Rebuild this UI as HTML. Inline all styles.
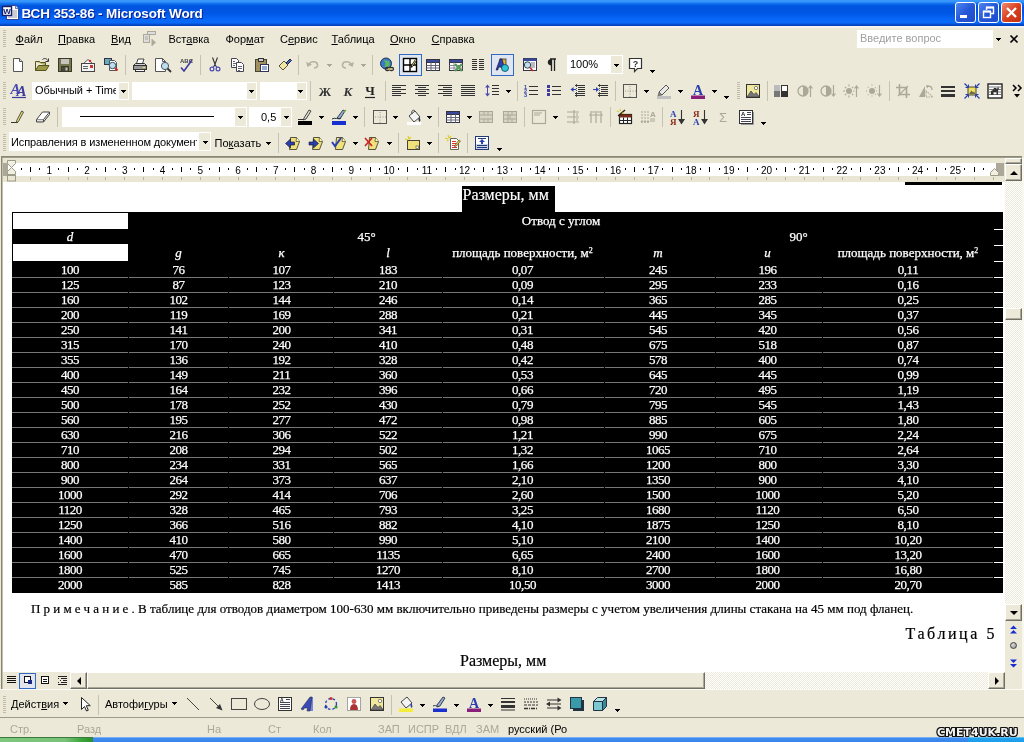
<!DOCTYPE html>
<html><head><meta charset="utf-8"><title>ВСН 353-86 - Microsoft Word</title>
<style>
html,body{margin:0;padding:0}
body{width:1024px;height:742px;overflow:hidden;position:relative;background:#ece9d8;font-family:"Liberation Sans","DejaVu Sans",sans-serif;font-size:11px;color:#000}
.a{position:absolute}
div,span{box-sizing:border-box}
/* title */
#tb{position:absolute;left:0;top:0;width:1024px;height:26px;background:linear-gradient(#3c9afc 0,#3492fb 7%,#1170ee 14%,#0258e2 22%,#0054e0 30%,#0056e3 48%,#035ff0 62%,#0868f8 76%,#0a6af8 88%,#0650d4 93%,#003cae 100%)}
#tt{position:absolute;left:21.500px;top:5.500px;font:bold 13.500px "Liberation Sans","DejaVu Sans",sans-serif;color:#fff;text-shadow:1px 1px 0 #0a1e8c;letter-spacing:-0.15px;white-space:nowrap}
.wb{position:absolute;top:2px;width:21px;height:21px;border:1px solid #fff;border-radius:3px;background:linear-gradient(135deg,#4f86f0 0%,#2458d8 50%,#1f4ccc 100%)}
.wb.x{background:linear-gradient(135deg,#ee8b6f 0%,#d9411f 50%,#c23010 100%)}
/* menu */
.m{position:absolute;top:33px;font-size:11px;white-space:nowrap}
.m u{text-decoration:underline}
/* doc */
#doc{position:absolute;left:3px;top:182px;width:1002px;height:490px;background:#fff}
.ser{font-family:"Liberation Serif","DejaVu Serif",serif;-webkit-text-stroke:0.2px currentColor}
.c{position:absolute;width:80px;text-align:center;color:#fff;font:13px/14px "Liberation Serif","DejaVu Serif",serif;white-space:nowrap;letter-spacing:-0.45px;-webkit-text-stroke:0.25px #fff}
.rl{position:absolute;left:12px;width:982px;height:1px;background:#767676}
.re{position:absolute;left:994px;width:9px;height:1px;background:#fff}

.sp{position:absolute;width:1px;background:#c5c2b2}
.dd{position:absolute;width:0;height:0;border-left:3px solid transparent;border-right:3px solid transparent;border-top:3px solid #000}
.gr{position:absolute;width:3px;background:repeating-linear-gradient(#c0bca8 0,#c0bca8 1px,transparent 1px,transparent 2px)}
.cb{position:absolute;background:#fff;font-size:11px;overflow:hidden}
.act{position:absolute;border:1px solid #316ac5;background:#dfe6f2}
.rn{position:absolute;top:164.500px;width:20px;text-align:center;font-size:10px;line-height:12px}
svg{overflow:visible}

.sb{position:absolute;background:#ece9d8;border:1px solid;border-color:#fff #716f64 #716f64 #fff;box-shadow:inset -1px -1px 0 #aca899}
#root{position:absolute;left:0;top:0;width:1024px;height:742px;overflow:hidden;will-change:transform;transform:translateZ(0)}
</style></head><body><div id="root">
<!-- title bar -->
<div id="tb"></div>
<div id="tbl" class="a" style="left:0;top:26px;width:1024px;height:2px;background:linear-gradient(#f6f7fb,#f1efe6)"></div>
<div id="tt">ВСН 353-86 - Microsoft Word</div>
<div class="wb" style="left:955px"></div>
<div class="wb" style="left:978px"></div>
<div class="wb x" style="left:1001px"></div>

<svg class="a" style="left:2px;top:4px" width="17" height="17" viewBox="0 0 17 17"><path d="M4.500 1.500h9l3 3v11h-12z" fill="#fff" stroke="#1a2a7a" stroke-width=".8"/><path d="M13.500 1.500v3h3" fill="#dde" stroke="#1a2a7a" stroke-width=".6"/><path d="M10 7h5M10 9h5M10 11h5M6 13h9" stroke="#99a"/><rect x="0.500" y="2.500" width="9" height="9" fill="#fff" stroke="#14206a" stroke-width="1.400"/><text x="5" y="10" text-anchor="middle" font-family="Liberation Sans,sans-serif" font-weight="bold" font-size="8" fill="#14206a">W</text></svg>
<svg class="a" style="left:955px;top:2px" width="21" height="21" viewBox="0 0 21 21"><rect x="5" y="13" width="7" height="3" fill="#fff"/></svg>
<svg class="a" style="left:978px;top:2px" width="21" height="21" viewBox="0 0 21 21"><path d="M8.500 8v-2.500h7v6h-2.500" fill="none" stroke="#fff" stroke-width="1.400"/><path d="M8 5.500h8" stroke="#fff" stroke-width="2"/><rect x="5.500" y="9.500" width="7" height="6" fill="none" stroke="#fff" stroke-width="1.400"/><path d="M5 9.500h8" stroke="#fff" stroke-width="2"/></svg>
<svg class="a" style="left:1001px;top:2px" width="21" height="21" viewBox="0 0 21 21"><path d="M6 6l9 9M15 6l-9 9" stroke="#fff" stroke-width="2.400"/></svg>
<div class="gr" style="left:3px;top:30px;height:17px"></div>
<span class="m" style="left:15.5px"><u>Ф</u>айл</span>
<span class="m" style="left:58px"><u>П</u>равка</span>
<span class="m" style="left:111px"><u>В</u>ид</span>
<span class="m" style="left:168.5px">Вст<u>а</u>вка</span>
<span class="m" style="left:225.5px">Фор<u>м</u>ат</span>
<span class="m" style="left:280px">С<u>е</u>рвис</span>
<span class="m" style="left:331.5px"><u>Т</u>аблица</span>
<span class="m" style="left:390px"><u>О</u>кно</span>
<span class="m" style="left:431.5px"><u>С</u>правка</span>
<svg class="a" style="left:141px;top:31px" width="16" height="16" viewBox="0 0 16 16"><rect x="2.500" y="3.500" width="6" height="8" fill="#ddd" stroke="#aca899"/><rect x="6.500" y="0.500" width="8" height="3" fill="#ddd" stroke="#aca899"/><path d="M4 6h3M4 8h3" stroke="#aca899"/><path d="M11 8l4 3.500-4 3.500z" fill="#aca899"/><path d="M11 8v7" stroke="#aca899"/></svg>
<div class="cb" style="left:857px;top:30px;width:136px;height:18px"><span style="position:absolute;left:3px;top:2px;color:#a0a0a0;white-space:nowrap;letter-spacing:0px;">Введите вопрос</span></div>
<svg class="a" style="left:996px;top:38px" width="5" height="3" viewBox="0 0 5 3" shape-rendering="crispEdges"><path d="M0 0h5v1h-5zM1 1h3v1h-3zM2 2h1v1h-1z" fill="#000"/></svg>
<svg class="a" style="left:1009px;top:34px" width="10" height="10" viewBox="0 0 10 10"><path d="M1.500 1.500l7 7M8.500 1.500l-7 7" stroke="#000" stroke-width="1.700"/></svg>
<div class="gr" style="left:3px;top:56px;height:18px"></div>
<svg class="a" style="left:10px;top:57px" width="16" height="16" viewBox="0 0 16 16"><path d="M3.5 1.5h6l3 3v10h-9z" fill="#fff" stroke="#555"/><path d="M9.5 1.5v3h3" fill="#ddd" stroke="#555"/></svg>
<svg class="a" style="left:34px;top:57px" width="16" height="16" viewBox="0 0 16 16"><path d="M1.500 4.500h4l1 1h5v3" fill="#b5b360" stroke="#55541c"/><path d="M1.500 13.500v-9" stroke="#55541c"/><path d="M1.500 13.500l3-5h10.500l-3 5z" fill="#9c9a45" stroke="#55541c"/><path d="M8.500 2.500c2-1.800 4.500-1 5 1" fill="none" stroke="#333"/><path d="M11.500 4.500h3v-3" fill="none" stroke="#333"/></svg>
<svg class="a" style="left:57px;top:57px" width="16" height="16" viewBox="0 0 16 16"><rect x="1.500" y="1.500" width="13" height="13" fill="#77774f" stroke="#3a3a2a"/><rect x="4" y="2" width="8" height="5" fill="#c4c4bc"/><rect x="4.500" y="9.500" width="7" height="5" fill="#4a4a3a" stroke="#3a3a2a"/><rect x="8.500" y="10.500" width="2" height="3" fill="#c4c4bc"/></svg>
<svg class="a" style="left:80px;top:57px" width="16" height="16" viewBox="0 0 16 16"><path d="M3.500 6.500l4.500-4 4.500 4" fill="#fff" stroke="#555"/><rect x="1.500" y="6.500" width="13" height="8" fill="#f4f4f4" stroke="#444"/><rect x="3" y="9" width="5" height="1" fill="#666"/><rect x="3" y="11" width="5" height="1" fill="#666"/><rect x="10" y="8" width="3" height="3" fill="#c33"/><circle cx="10" cy="4" r="1.200" fill="#d22"/></svg>
<svg class="a" style="left:103px;top:57px" width="16" height="16" viewBox="0 0 16 16"><rect x="1.500" y="1.500" width="7" height="6" fill="#6ab" stroke="#334"/><path d="M6.500 3.500h5l2 2v8h-7z" fill="#fff" stroke="#555"/><circle cx="9.500" cy="8.500" r="3.200" fill="#bfe0ea" stroke="#357"/><path d="M12 11l2.500 2.500" stroke="#c22" stroke-width="2"/></svg>
<div class="sp" style="left:125px;top:55px;height:20px"></div>
<svg class="a" style="left:132px;top:57px" width="16" height="16" viewBox="0 0 16 16"><path d="M4.500 6.500l1.500-4.500h6l-1.500 4.500" fill="#fff" stroke="#444"/><path d="M1.500 8.500l2-2h9l2 2v4h-13z" fill="#cfcfcf" stroke="#333"/><rect x="1.500" y="8.500" width="13" height="4" fill="#9a9a9a" stroke="#333"/><rect x="3.500" y="12.500" width="9" height="2" fill="#fff" stroke="#333"/><rect x="11" y="10" width="2" height="1" fill="#ee3"/></svg>
<svg class="a" style="left:155px;top:57px" width="16" height="16" viewBox="0 0 16 16"><path d="M0.500 1.500h7l3 3v10h-10z" fill="#fff" stroke="#555"/><path d="M7.500 1.500v3h3" fill="none" stroke="#555"/><circle cx="10" cy="9" r="3.600" fill="#bfe0ea" stroke="#456"/><path d="M12.500 11.500l3.500 3.500" stroke="#333" stroke-width="1.800"/></svg>
<svg class="a" style="left:178px;top:57px" width="16" height="16" viewBox="0 0 16 16"><text x="2" y="6" font-family="Liberation Sans,sans-serif" font-size="6" font-weight="bold" fill="#444">ABC</text><path d="M3 10.500l3 3.500 8-11" fill="none" stroke="#3b3b9f" stroke-width="1.600"/></svg>
<div class="sp" style="left:200px;top:55px;height:20px"></div>
<svg class="a" style="left:207px;top:57px" width="16" height="16" viewBox="0 0 16 16"><path d="M5.500 0.500l3.200 8.500M10.500 0.500l-3.200 8.500" stroke="#333" stroke-width="1.100" fill="none"/><circle cx="5" cy="12" r="1.900" fill="none" stroke="#4a4ab0" stroke-width="1.200"/><circle cx="11" cy="12" r="1.900" fill="none" stroke="#4a4ab0" stroke-width="1.200"/><path d="M7.300 9l-1.500 1.500M8.700 9l1.500 1.500" stroke="#4a4ab0" stroke-width="1.100"/></svg>
<svg class="a" style="left:230px;top:57px" width="16" height="16" viewBox="0 0 16 16"><path d="M1.500 1.500h5l2 2v7h-7z" fill="#fff" stroke="#445"/><path d="M6.500 5.500h5l2 2v7h-7z" fill="#fff" stroke="#445"/><path d="M8 9.500h4M8 11.500h4M8 13.500h2M3 4.500h2M3 6.500h3M3 8.500h2" stroke="#667" /></svg>
<svg class="a" style="left:254px;top:57px" width="16" height="16" viewBox="0 0 16 16"><rect x="1.500" y="2.500" width="11" height="12" fill="#a09060" stroke="#443"/><rect x="4.500" y="1.500" width="5" height="3" fill="#ccc" stroke="#333"/><rect x="6.500" y="7.500" width="8" height="7" fill="#fff" stroke="#335"/><path d="M8 10h5M8 12h5" stroke="#35a"/></svg>
<svg class="a" style="left:277px;top:57px" width="16" height="16" viewBox="0 0 16 16"><path d="M2 9l5-5 4 4-5 5z" fill="#f4e8a0" stroke="#554"/><path d="M9 6l4-4 1.500 1.500-4 4z" fill="#46b" stroke="#224"/><path d="M3 10l3 3" stroke="#554"/></svg>
<div class="sp" style="left:298px;top:55px;height:20px"></div>
<svg class="a" style="left:305px;top:57px" width="16" height="16" viewBox="0 0 16 16"><path d="M3.500 8.500c1-4.500 8-5 9-1 .5 2.500-1.500 3.500-3.500 3.500" fill="none" stroke="#b5b2a2" stroke-width="1.600"/><path d="M1 5l1.500 5 4.500-2.500z" fill="#b5b2a2"/></svg>
<svg class="a" style="left:327px;top:64px" width="5" height="3" viewBox="0 0 5 3" shape-rendering="crispEdges"><path d="M0 0h5v1h-5zM1 1h3v1h-3zM2 2h1v1h-1z" fill="#aca899"/></svg>
<svg class="a" style="left:339px;top:57px" width="16" height="16" viewBox="0 0 16 16"><path d="M12.500 8.500c-1-4.500-8-5-9-1-.5 2.500 1.500 3.500 3.500 3.500" fill="none" stroke="#b5b2a2" stroke-width="1.600"/><path d="M15 5l-1.500 5-4.500-2.500z" fill="#b5b2a2"/></svg>
<svg class="a" style="left:361px;top:64px" width="5" height="3" viewBox="0 0 5 3" shape-rendering="crispEdges"><path d="M0 0h5v1h-5zM1 1h3v1h-3zM2 2h1v1h-1z" fill="#aca899"/></svg>
<div class="sp" style="left:372px;top:55px;height:20px"></div>
<svg class="a" style="left:379px;top:57px" width="16" height="16" viewBox="0 0 16 16"><circle cx="7" cy="6.500" r="5.500" fill="#3a78c8" stroke="#235"/><path d="M4 3c2 1 3 3 2 5s1 3 3 2c2-1 2-4 1-6" fill="#5cb85c" stroke="none"/><rect x="6.500" y="10.500" width="4" height="3" rx="1.500" fill="none" stroke="#333" stroke-width="1.300"/><rect x="10.500" y="10.500" width="4" height="3" rx="1.500" fill="none" stroke="#333" stroke-width="1.300"/><path d="M9 12h3" stroke="#dc5" stroke-width="1.500"/></svg>
<div class="act" style="left:399px;top:54px;width:23px;height:22px"></div>
<svg class="a" style="left:402px;top:57px" width="16" height="16" viewBox="0 0 16 16"><rect x="1.500" y="1.500" width="13" height="13" fill="#fff" stroke="#000" stroke-width="1.400"/><path d="M8 1.500v13M1.500 8h13" stroke="#000" stroke-width="1.400"/><path d="M10 9l4-6" stroke="#000" stroke-width="2.200"/><path d="M10 9l4-6" stroke="#e9d36a" stroke-width="1"/><path d="M9.300 10.500l.7-1.500" stroke="#000" stroke-width="1.500"/></svg>
<svg class="a" style="left:425px;top:57px" width="16" height="16" viewBox="0 0 16 16"><rect x="1.500" y="2.500" width="13" height="11" fill="#fff" stroke="#334"/><rect x="1.500" y="2.500" width="13" height="3" fill="#3a4a9a" stroke="#334"/><path d="M6 5.500v8M10.500 5.500v8M1.500 8.500h13M1.500 11h13" stroke="#667"/></svg>
<svg class="a" style="left:448px;top:57px" width="16" height="16" viewBox="0 0 16 16"><rect x="1.500" y="2.500" width="13" height="11" fill="#fff" stroke="#334"/><rect x="1.500" y="2.500" width="13" height="3" fill="#3a4a9a" stroke="#334"/><path d="M6 5.500v8M1.500 8.500h13M1.500 11h13" stroke="#889"/><path d="M7 7l7 7M14 7l-7 7" stroke="#5a9a5a" stroke-width="2.400"/></svg>
<svg class="a" style="left:470px;top:57px" width="16" height="16" viewBox="0 0 16 16"><path d="M2 2.500h5M2 4.500h5M2 6.500h5M2 8.500h5M2 10.500h5M2 12.500h5M9 2.500h5M9 4.500h5M9 6.500h5M9 8.500h5M9 10.500h5M9 12.500h5" stroke="#333" stroke-width="1"/></svg>
<div class="act" style="left:491px;top:54px;width:23px;height:22px"></div>
<svg class="a" style="left:494px;top:57px" width="16" height="16" viewBox="0 0 16 16"><rect x="6" y="2" width="6" height="8" fill="#e2b13c" stroke="#333" stroke-width=".8"/><path d="M2 13l4-11 2 0 3 11h-2.500l-.8-3h-3l-.9 3z" fill="#2a3fb0" stroke="#112" stroke-width=".6"/><circle cx="11" cy="11" r="3.500" fill="#2cc6d8" stroke="#145" stroke-width=".8"/></svg>
<svg class="a" style="left:522px;top:57px" width="16" height="16" viewBox="0 0 16 16"><rect x="1.500" y="1.500" width="13" height="12" fill="#fff" stroke="#334"/><rect x="1.500" y="1.500" width="13" height="2.500" fill="#3a4a9a"/><path d="M9 6h4M9 8h4M9 10h4" stroke="#778"/><circle cx="5.500" cy="8" r="3.200" fill="#bfe0ea" stroke="#345"/><path d="M8 10.500l3 3.500" stroke="#c33" stroke-width="1.800"/></svg>
<svg class="a" style="left:543px;top:57px" width="16" height="16" viewBox="0 0 16 16"><path d="M7 2h6M8.500 2v12M11.500 2v12" stroke="#222" stroke-width="1.300" fill="none"/><path d="M8.500 2c-5 0-5 6.500 0 6.500z" fill="#222"/></svg>
<div class="cb" style="left:567px;top:55px;width:56px;height:19px"><span style="position:absolute;left:3px;top:2.5px;color:#000;white-space:nowrap;letter-spacing:0px;">100%</span></div>
<div class="a" style="left:611px;top:56px;width:11px;height:17px;background:#ece9d8"></div>
<svg class="a" style="left:614px;top:64px" width="5" height="3" viewBox="0 0 5 3" shape-rendering="crispEdges"><path d="M0 0h5v1h-5zM1 1h3v1h-3zM2 2h1v1h-1z" fill="#000"/></svg>
<svg class="a" style="left:628px;top:57px" width="16" height="16" viewBox="0 0 16 16"><path d="M1.500 1.500h12v10h-4l-3 3v-3h-5z" fill="#fff" stroke="#333" stroke-width="1.200"/><text x="4.700" y="10" font-family="Liberation Sans,sans-serif" font-size="9" font-weight="bold" fill="#333">?</text></svg>
<svg class="a" style="left:650px;top:70px" width="5" height="3" viewBox="0 0 5 3" shape-rendering="crispEdges"><path d="M0 0h5v1h-5zM1 1h3v1h-3zM2 2h1v1h-1z" fill="#000"/></svg>
<div class="gr" style="left:3px;top:82px;height:18px"></div>
<svg class="a" style="left:11px;top:83px" width="16" height="16" viewBox="0 0 16 16"><text x="-0.500" y="11" font-family="Liberation Serif,serif" font-size="15" font-style="italic" font-weight="bold" fill="#4a4ab0">A</text><text x="5.500" y="13" font-family="Liberation Serif,serif" font-size="15" font-style="italic" font-weight="bold" fill="#3b3ba0">A</text><path d="M1 14.500h14" stroke="#3b3ba0" stroke-width="1.200"/></svg>
<div class="cb" style="left:32px;top:82px;width:97px;height:18px"><span style="position:absolute;left:3px;top:2px;color:#000;white-space:nowrap;letter-spacing:-0.1px;overflow:hidden;width:80.5px;">Обычный + Time</span></div>
<div class="a" style="left:119px;top:83px;width:9px;height:16px;background:#ece9d8"></div>
<svg class="a" style="left:121px;top:90px" width="5" height="3" viewBox="0 0 5 3" shape-rendering="crispEdges"><path d="M0 0h5v1h-5zM1 1h3v1h-3zM2 2h1v1h-1z" fill="#000"/></svg>
<div class="cb" style="left:132px;top:82px;width:125px;height:18px"></div>
<div class="a" style="left:247px;top:83px;width:9px;height:16px;background:#ece9d8"></div>
<svg class="a" style="left:249px;top:90px" width="5" height="3" viewBox="0 0 5 3" shape-rendering="crispEdges"><path d="M0 0h5v1h-5zM1 1h3v1h-3zM2 2h1v1h-1z" fill="#000"/></svg>
<div class="cb" style="left:260px;top:82px;width:47px;height:18px"></div>
<div class="a" style="left:297px;top:83px;width:9px;height:16px;background:#ece9d8"></div>
<svg class="a" style="left:298px;top:90px" width="5" height="3" viewBox="0 0 5 3" shape-rendering="crispEdges"><path d="M0 0h5v1h-5zM1 1h3v1h-3zM2 2h1v1h-1z" fill="#000"/></svg>
<div class="sp" style="left:310px;top:81px;height:20px"></div>
<svg class="a" style="left:317px;top:83px" width="16" height="16" viewBox="0 0 16 16"><text x="8" y="12.500" text-anchor="middle" font-family="Liberation Serif,serif" font-size="12.500" font-weight="bold" fill="#333">Ж</text></svg>
<svg class="a" style="left:340px;top:83px" width="16" height="16" viewBox="0 0 16 16"><text x="8" y="12.500" text-anchor="middle" font-family="Liberation Serif,serif" font-size="13" font-weight="bold" font-style="italic" fill="#333">К</text></svg>
<svg class="a" style="left:362px;top:83px" width="16" height="16" viewBox="0 0 16 16"><text x="8" y="12" text-anchor="middle" font-family="Liberation Serif,serif" font-size="13" font-weight="bold" fill="#222">Ч</text><path d="M3 14.500h10" stroke="#222" stroke-width="1.200"/></svg>
<div class="sp" style="left:385px;top:81px;height:20px"></div>
<svg class="a" style="left:391px;top:83px" width="16" height="16" viewBox="0 0 16 16"><path d="M1 2.500h14M1 4.500h9M1 6.500h14M1 8.500h9M1 10.500h14M1 12.500h9" stroke="#333" stroke-width="1"/></svg>
<svg class="a" style="left:414px;top:83px" width="16" height="16" viewBox="0 0 16 16"><path d="M1 2.500h14M4 4.500h8M1 6.500h14M4 8.500h8M1 10.500h14M4 12.500h8" stroke="#333" stroke-width="1"/></svg>
<svg class="a" style="left:437px;top:83px" width="16" height="16" viewBox="0 0 16 16"><path d="M1 2.500h14M6 4.500h9M1 6.500h14M6 8.500h9M1 10.500h14M6 12.500h9" stroke="#333" stroke-width="1"/></svg>
<svg class="a" style="left:460px;top:83px" width="16" height="16" viewBox="0 0 16 16"><path d="M1 2.500h14M1 4.500h14M1 6.500h14M1 8.500h14M1 10.500h14M1 12.500h14" stroke="#333" stroke-width="1"/></svg>
<svg class="a" style="left:484px;top:83px" width="16" height="16" viewBox="0 0 16 16"><path d="M8 2.500h7M8 5.500h7M8 8.500h7M8 11.500h7" stroke="#333" stroke-width="1"/><path d="M3.500 2v11" stroke="#4a4ab0" stroke-width="1"/><path d="M1 4.500l2.500-3 2.500 3zM1 10.500l2.500 3 2.500-3z" fill="#4a4ab0"/></svg>
<svg class="a" style="left:506px;top:90px" width="5" height="3" viewBox="0 0 5 3" shape-rendering="crispEdges"><path d="M0 0h5v1h-5zM1 1h3v1h-3zM2 2h1v1h-1z" fill="#000"/></svg>
<div class="sp" style="left:517px;top:81px;height:20px"></div>
<svg class="a" style="left:523px;top:83px" width="16" height="16" viewBox="0 0 16 16"><path d="M6 3.500h9M6 7.500h9M6 11.500h9" stroke="#333" stroke-width="1"/><text x="1" y="5.500" font-family="Liberation Sans,sans-serif" font-size="5.500" font-weight="bold" fill="#2a3fb0">1</text><text x="1" y="9.500" font-family="Liberation Sans,sans-serif" font-size="5.500" font-weight="bold" fill="#2a3fb0">2</text><text x="1" y="13.500" font-family="Liberation Sans,sans-serif" font-size="5.500" font-weight="bold" fill="#2a3fb0">3</text></svg>
<svg class="a" style="left:546px;top:83px" width="16" height="16" viewBox="0 0 16 16"><path d="M6 3.500h9M6 7.500h9M6 11.500h9" stroke="#333" stroke-width="1"/><rect x="1" y="2" width="3" height="3" fill="#3b3b9f"/><rect x="1" y="6" width="3" height="3" fill="#3b3b9f"/><rect x="1" y="10" width="3" height="3" fill="#3b3b9f"/></svg>
<svg class="a" style="left:570px;top:83px" width="16" height="16" viewBox="0 0 16 16"><path d="M5 2.500h10M8 4.500h7M8 6.500h7M8 8.500h7M5 10.500h10M5 12.500h10" stroke="#333" stroke-width="1"/><path d="M6 6.500h-5" stroke="#2a3fb0" stroke-width="1"/><path d="M3.500 4l-3 2.500 3 2.500z" fill="#2a3fb0"/><path d="M6.500 1v13" stroke="#555" stroke-dasharray="1 1"/></svg>
<svg class="a" style="left:593px;top:83px" width="16" height="16" viewBox="0 0 16 16"><path d="M5 2.500h10M8 4.500h7M8 6.500h7M8 8.500h7M5 10.500h10M5 12.500h10" stroke="#333" stroke-width="1"/><path d="M0 6.500h5" stroke="#2a3fb0" stroke-width="1"/><path d="M3 4l3 2.500-3 2.500z" fill="#2a3fb0"/><path d="M6.500 1v13" stroke="#555" stroke-dasharray="1 1"/></svg>
<div class="sp" style="left:615px;top:81px;height:20px"></div>
<svg class="a" style="left:622px;top:83px" width="16" height="16" viewBox="0 0 16 16"><rect x="1.500" y="1.500" width="13" height="13" fill="none" stroke="#555" stroke-width="1"/><path d="M8 3v11M3 8h11" stroke="#999" stroke-dasharray="1 1.500"/></svg>
<svg class="a" style="left:644px;top:90px" width="5" height="3" viewBox="0 0 5 3" shape-rendering="crispEdges"><path d="M0 0h5v1h-5zM1 1h3v1h-3zM2 2h1v1h-1z" fill="#000"/></svg>
<svg class="a" style="left:656px;top:83px" width="16" height="16" viewBox="0 0 16 16"><path d="M3 9l7-7 3 3-7 7z" fill="#e8e8e8" stroke="#555"/><path d="M3 9l-1 4 4-1z" fill="#888" stroke="#555" stroke-width=".6"/><rect x="1" y="13" width="14" height="3" fill="#c0c0c0"/></svg>
<svg class="a" style="left:678px;top:90px" width="5" height="3" viewBox="0 0 5 3" shape-rendering="crispEdges"><path d="M0 0h5v1h-5zM1 1h3v1h-3zM2 2h1v1h-1z" fill="#000"/></svg>
<svg class="a" style="left:690px;top:83px" width="16" height="16" viewBox="0 0 16 16"><text x="8" y="11.500" text-anchor="middle" font-family="Liberation Serif,serif" font-size="14" font-weight="bold" fill="#2a3fb0">A</text><rect x="1" y="12.500" width="14" height="3.500" fill="#8a1f7a"/></svg>
<svg class="a" style="left:712px;top:90px" width="5" height="3" viewBox="0 0 5 3" shape-rendering="crispEdges"><path d="M0 0h5v1h-5zM1 1h3v1h-3zM2 2h1v1h-1z" fill="#000"/></svg>
<svg class="a" style="left:724px;top:96px" width="5" height="3" viewBox="0 0 5 3" shape-rendering="crispEdges"><path d="M0 0h5v1h-5zM1 1h3v1h-3zM2 2h1v1h-1z" fill="#000"/></svg>
<div class="gr" style="left:737px;top:82px;height:18px"></div>
<div class="sp" style="left:767px;top:81px;height:20px"></div>
<svg class="a" style="left:745px;top:83px" width="16" height="16" viewBox="0 0 16 16"><rect x="1.500" y="1.500" width="13" height="13" fill="#f0e89a" stroke="#333"/><circle cx="11" cy="5" r="1.700" fill="#fff" stroke="#555" stroke-width=".7"/><path d="M2 14l4-6 3 3.500 2-2 3.500 4.500z" fill="#777" stroke="#333" stroke-width=".6"/></svg>
<svg class="a" style="left:773px;top:83px" width="16" height="16" viewBox="0 0 16 16"><rect x="1" y="2" width="6" height="12" fill="#777"/><rect x="1" y="2" width="6" height="6" fill="#bbb"/><rect x="8.500" y="2.500" width="6" height="11" fill="#fff" stroke="#333"/><rect x="8.500" y="8" width="6" height="5.500" fill="#333"/></svg>
<svg class="a" style="left:797px;top:83px" width="16" height="16" viewBox="0 0 16 16"><circle cx="6" cy="8" r="5" fill="none" stroke="#aca899" stroke-width="1.300"/><path d="M6 3a5 5 0 0 1 0 10z" fill="#aca899"/><path d="M13.500 14v-11M11.500 5.500l2-2.500 2 2.500" fill="none" stroke="#aca899" stroke-width="1.200"/></svg>
<svg class="a" style="left:820px;top:83px" width="16" height="16" viewBox="0 0 16 16"><circle cx="6" cy="8" r="5" fill="none" stroke="#aca899" stroke-width="1.300"/><path d="M6 3a5 5 0 0 1 0 10z" fill="#aca899"/><path d="M13.500 2v11M11.500 10.500l2 2.500 2-2.500" fill="none" stroke="#aca899" stroke-width="1.200"/></svg>
<svg class="a" style="left:843px;top:83px" width="16" height="16" viewBox="0 0 16 16"><circle cx="6" cy="8" r="3" fill="#aca899"/><path d="M6 1.500v2M6 12.500v2M0 8h2M10 8h1.500M1.800 3.800l1.400 1.400M9 11l1.200 1.200M1.800 12.200l1.400-1.400M9 5l1.200-1.200" stroke="#aca899" stroke-width="1.100"/><path d="M13.500 14v-11M11.500 5.500l2-2.500 2 2.500" fill="none" stroke="#aca899" stroke-width="1.200"/></svg>
<svg class="a" style="left:866px;top:83px" width="16" height="16" viewBox="0 0 16 16"><circle cx="6" cy="8" r="3" fill="#aca899"/><path d="M6 1.500v2M6 12.500v2M0 8h2M10 8h1.500M1.800 3.800l1.400 1.400M9 11l1.200 1.200M1.800 12.200l1.400-1.400M9 5l1.200-1.200" stroke="#aca899" stroke-width="1.100" stroke-dasharray="1 1"/><path d="M13.500 2v11M11.500 10.500l2 2.500 2-2.500" fill="none" stroke="#aca899" stroke-width="1.200"/></svg>
<div class="sp" style="left:889px;top:81px;height:20px"></div>
<svg class="a" style="left:895px;top:83px" width="16" height="16" viewBox="0 0 16 16"><path d="M4.500 1v10.500h10.500M1 4.500h10.500v10.500" fill="none" stroke="#aca899" stroke-width="1.600"/><path d="M3 13l10-10" stroke="#aca899" stroke-width="1.100"/></svg>
<svg class="a" style="left:918px;top:83px" width="16" height="16" viewBox="0 0 16 16"><path d="M1 14l6-11v11z" fill="#aca899"/><path d="M8 14h7l-7-6z" fill="none" stroke="#aca899" stroke-width="1.100" stroke-dasharray="1.500 1"/><path d="M9 4c3-2 5 0 5 3" fill="none" stroke="#aca899" stroke-width="1.300"/><path d="M8 2l3 .5-2 3z" fill="#aca899"/></svg>
<svg class="a" style="left:940px;top:83px" width="16" height="16" viewBox="0 0 16 16"><rect x="1" y="3" width="14" height="2" fill="#333"/><rect x="1" y="7" width="14" height="2" fill="#333"/><rect x="1" y="11" width="14" height="3" fill="#333"/></svg>
<svg class="a" style="left:964px;top:83px" width="16" height="16" viewBox="0 0 16 16"><rect x="4" y="4" width="8" height="8" fill="#f0e060" stroke="#443"/><path d="M5 11l2.500-3.500 1.500 2 1-1 1.500 2.500z" fill="#665"/><path d="M0.500 0.500l3.500 3.500M15.500 0.500l-3.500 3.500M0.500 15.500l3.500-3.500M15.500 15.500l-3.500-3.500" stroke="#2a3fb0" stroke-width="1.200"/><path d="M1.500 4.500h3v-3M14.500 4.500h-3v-3M1.500 11.500h3v3M14.500 11.500h-3v3" stroke="#2a3fb0" fill="none"/></svg>
<svg class="a" style="left:987px;top:83px" width="16" height="16" viewBox="0 0 16 16"><rect x="1" y="1" width="14" height="14" fill="#fff" stroke="#222" stroke-width="1.400"/><path d="M2 4h12M2 6.500h12M2 9h12M2 11.500h12" stroke="#777"/><path d="M4 12v-4l2-1 1-2h2l1 1 1-2 1 1-1 3v4h-1.500v-3h-3v3z" fill="#333"/></svg>
<svg class="a" style="left:1011px;top:83px" width="12" height="16" viewBox="0 0 12 16"><path d="M2 2l3 3-3 3M7 2l3 3-3 3" fill="none" stroke="#000" stroke-width="1.500"/><path d="M3 11h6l-3 3.500z" fill="#000"/></svg>
<div class="gr" style="left:3px;top:108px;height:18px"></div>
<svg class="a" style="left:10px;top:109px" width="16" height="16" viewBox="0 0 16 16"><path d="M1 13.500h7" stroke="#333" stroke-width="1"/><path d="M8.500 12.500l5-9.500-1.800-1-5 9.500-.4 2.300z" fill="#e6da7a" stroke="#443" stroke-width=".9"/></svg>
<svg class="a" style="left:35px;top:109px" width="16" height="16" viewBox="0 0 16 16"><path d="M1.500 10.500l6-7.500h7l-6 7.500z" fill="#fff" stroke="#444"/><path d="M1.500 10.500v2.500h7v-2.500M8.500 13l6-7.500v-2.500" fill="#ddd" stroke="#444"/></svg>
<div class="sp" style="left:57px;top:107px;height:20px"></div>
<div class="cb" style="left:62px;top:107px;width:185px;height:20px"></div>
<div class="a" style="left:80px;top:116px;width:134px;height:1px;background:#000"></div>
<div class="a" style="left:235px;top:108px;width:11px;height:18px;background:#ece9d8"></div>
<svg class="a" style="left:238px;top:116px" width="5" height="3" viewBox="0 0 5 3" shape-rendering="crispEdges"><path d="M0 0h5v1h-5zM1 1h3v1h-3zM2 2h1v1h-1z" fill="#000"/></svg>
<div class="cb" style="left:249px;top:107px;width:43px;height:20px"><span style="position:absolute;left:12px;top:4px;color:#000;white-space:nowrap;letter-spacing:0px;">0,5</span></div>
<div class="a" style="left:281px;top:108px;width:10px;height:18px;background:#ece9d8"></div>
<svg class="a" style="left:284px;top:116px" width="5" height="3" viewBox="0 0 5 3" shape-rendering="crispEdges"><path d="M0 0h5v1h-5zM1 1h3v1h-3zM2 2h1v1h-1z" fill="#000"/></svg>
<svg class="a" style="left:297px;top:109px" width="16" height="16" viewBox="0 0 16 16"><path d="M7 9l5-8 2 1-5 8-2.500 1z" fill="#ddd" stroke="#333" stroke-width=".9"/><path d="M1 10.500h6" stroke="#333"/><rect x="1" y="12" width="14" height="4" fill="#000"/></svg>
<svg class="a" style="left:319px;top:116px" width="5" height="3" viewBox="0 0 5 3" shape-rendering="crispEdges"><path d="M0 0h5v1h-5zM1 1h3v1h-3zM2 2h1v1h-1z" fill="#000"/></svg>
<svg class="a" style="left:331px;top:109px" width="16" height="16" viewBox="0 0 16 16"><path d="M6 9l6-8 2 1-5 8z" fill="#9ac" stroke="#234" stroke-width=".9"/><path d="M1 10c3-2 6 1 9-1" fill="none" stroke="#234"/><path d="M13 3l2-2" stroke="#7a4" stroke-width="1.300"/><rect x="1" y="12" width="14" height="4" fill="#1a2fd0"/></svg>
<svg class="a" style="left:353px;top:116px" width="5" height="3" viewBox="0 0 5 3" shape-rendering="crispEdges"><path d="M0 0h5v1h-5zM1 1h3v1h-3zM2 2h1v1h-1z" fill="#000"/></svg>
<div class="sp" style="left:364px;top:107px;height:20px"></div>
<svg class="a" style="left:372px;top:109px" width="16" height="16" viewBox="0 0 16 16"><rect x="1.500" y="1.500" width="13" height="13" fill="none" stroke="#555" stroke-width="1"/><path d="M8 3v11M3 8h11" stroke="#999" stroke-dasharray="1 1.500"/></svg>
<svg class="a" style="left:393px;top:116px" width="5" height="3" viewBox="0 0 5 3" shape-rendering="crispEdges"><path d="M0 0h5v1h-5zM1 1h3v1h-3zM2 2h1v1h-1z" fill="#000"/></svg>
<svg class="a" style="left:406px;top:109px" width="16" height="16" viewBox="0 0 16 16"><path d="M3 7l6-5 5 6-6 5z" fill="#f4f4f4" stroke="#444"/><path d="M9 2c-2-2-4 0-3 3" fill="none" stroke="#444"/><path d="M13 8c1.500 1.500 2 4 .5 5-1-1-1.500-3-.5-5z" fill="#335" /><rect x="1" y="13" width="14" height="3" fill="#fff"/></svg>
<svg class="a" style="left:427px;top:116px" width="5" height="3" viewBox="0 0 5 3" shape-rendering="crispEdges"><path d="M0 0h5v1h-5zM1 1h3v1h-3zM2 2h1v1h-1z" fill="#000"/></svg>
<div class="sp" style="left:438px;top:107px;height:20px"></div>
<svg class="a" style="left:445px;top:109px" width="16" height="16" viewBox="0 0 16 16"><rect x="1.500" y="2.500" width="13" height="11" fill="#fff" stroke="#334"/><rect x="1.500" y="2.500" width="13" height="3" fill="#3a4a9a" stroke="#334"/><path d="M6 5.500v8M10.500 5.500v8M1.500 8.500h13M1.500 11h13" stroke="#667"/></svg>
<svg class="a" style="left:467px;top:116px" width="5" height="3" viewBox="0 0 5 3" shape-rendering="crispEdges"><path d="M0 0h5v1h-5zM1 1h3v1h-3zM2 2h1v1h-1z" fill="#000"/></svg>
<svg class="a" style="left:478px;top:109px" width="16" height="16" viewBox="0 0 16 16"><rect x="1.500" y="2.500" width="13" height="11" fill="#d8d5c6" stroke="#aca899"/><path d="M1.500 6h13M1.500 10h13M6 2.500v3.500M10 2.500v3.500M6 10v3.500M10 10v3.500" stroke="#aca899"/></svg>
<svg class="a" style="left:502px;top:109px" width="16" height="16" viewBox="0 0 16 16"><rect x="1.500" y="2.500" width="13" height="11" fill="#d8d5c6" stroke="#aca899"/><path d="M1.500 6h13M1.500 10h13M6 2.500v11M10 2.500v3.500M10 10v3.500M8 6v4" stroke="#aca899"/></svg>
<div class="sp" style="left:524px;top:107px;height:20px"></div>
<svg class="a" style="left:531px;top:109px" width="16" height="16" viewBox="0 0 16 16"><rect x="1.500" y="1.500" width="13" height="13" fill="none" stroke="#aca899" stroke-width="1.200"/><path d="M3 4h8M3 6h6" stroke="#aca899"/></svg>
<svg class="a" style="left:553px;top:116px" width="5" height="3" viewBox="0 0 5 3" shape-rendering="crispEdges"><path d="M0 0h5v1h-5zM1 1h3v1h-3zM2 2h1v1h-1z" fill="#000"/></svg>
<svg class="a" style="left:565px;top:109px" width="16" height="16" viewBox="0 0 16 16"><path d="M2 3h12M2 8h12M2 13h12M9 1v14" stroke="#aca899" stroke-width="1.200"/><path d="M12 4v3M12 9v3" stroke="#aca899"/></svg>
<svg class="a" style="left:588px;top:109px" width="16" height="16" viewBox="0 0 16 16"><path d="M3 2v12M8 2v12M13 2v12M1 6h14" stroke="#aca899" stroke-width="1.200"/><path d="M4 3h3M9 3h3" stroke="#aca899"/></svg>
<div class="sp" style="left:610px;top:107px;height:20px"></div>
<svg class="a" style="left:617px;top:109px" width="16" height="16" viewBox="0 0 16 16"><rect x="2.500" y="5.500" width="12" height="9" fill="#fff" stroke="#222" stroke-width="1.200"/><rect x="2.500" y="5.500" width="12" height="3" fill="#7a2a1a"/><path d="M6.500 8.500v6M10.500 8.500v6M2.500 11.500h12" stroke="#222"/><path d="M1 7l7-6" stroke="#222" stroke-width="1.400"/><path d="M0 2l2 1M3 0l.5 2M5 4l2 .5" stroke="#dc2" stroke-width="1.200"/></svg>
<svg class="a" style="left:640px;top:109px" width="16" height="16" viewBox="0 0 16 16"><path d="M2 2v11M5 2v11M8 2v11" stroke="#aca899" stroke-dasharray="2 1"/><path d="M1 12l1 2 1-2M4 12l1 2 1-2M7 12l1 2 1-2" fill="none" stroke="#aca899"/><text x="10" y="8" font-family="Liberation Sans,sans-serif" font-size="8" font-weight="bold" fill="#aca899">A</text><path d="M10 10h5M10 12h5" stroke="#aca899"/></svg>
<div class="sp" style="left:662px;top:107px;height:20px"></div>
<svg class="a" style="left:670px;top:109px" width="16" height="16" viewBox="0 0 16 16"><text x="0" y="7.500" font-family="Liberation Serif,serif" font-size="9" font-weight="bold" fill="#2a3fb0">А</text><text x="0" y="15.500" font-family="Liberation Serif,serif" font-size="9" font-weight="bold" fill="#8a2a1a">Я</text><path d="M11.500 1v13M9 10.500l2.500 4 2.500-4z" stroke="#333" fill="#333" stroke-width="1.100"/></svg>
<svg class="a" style="left:693px;top:109px" width="16" height="16" viewBox="0 0 16 16"><text x="0" y="7.500" font-family="Liberation Serif,serif" font-size="9" font-weight="bold" fill="#8a2a1a">Я</text><text x="0" y="15.500" font-family="Liberation Serif,serif" font-size="9" font-weight="bold" fill="#2a3fb0">А</text><path d="M11.500 1v13M9 10.500l2.500 4 2.500-4z" stroke="#333" fill="#333" stroke-width="1.100"/></svg>
<svg class="a" style="left:715px;top:109px" width="16" height="16" viewBox="0 0 16 16"><text x="8" y="13" text-anchor="middle" font-family="Liberation Sans,sans-serif" font-size="13" fill="#aca899">Σ</text></svg>
<svg class="a" style="left:738px;top:109px" width="16" height="16" viewBox="0 0 16 16"><rect x="1.500" y="1.500" width="13" height="13" fill="#fff" stroke="#333"/><path d="M15.500 3v12.500h-12.500" fill="none" stroke="#999"/><path d="M3 8.500h10M3 10.500h10M3 12.500h10M9 3.500h4M9 5.500h4" stroke="#445"/><text x="3" y="7" font-family="Liberation Sans,sans-serif" font-size="6" font-weight="bold" fill="#222">A</text></svg>
<svg class="a" style="left:761px;top:122px" width="5" height="3" viewBox="0 0 5 3" shape-rendering="crispEdges"><path d="M0 0h5v1h-5zM1 1h3v1h-3zM2 2h1v1h-1z" fill="#000"/></svg>
<div class="gr" style="left:3px;top:134px;height:18px"></div>
<div class="cb" style="left:9px;top:132px;width:202px;height:19px"><span style="position:absolute;left:2px;top:4px;color:#000;white-space:nowrap;letter-spacing:-0.12px;overflow:hidden;width:185.5px;">Исправления в измененном документ</span></div>
<div class="a" style="left:199px;top:133px;width:11px;height:17px;background:#ece9d8"></div>
<svg class="a" style="left:203px;top:141px" width="5" height="3" viewBox="0 0 5 3" shape-rendering="crispEdges"><path d="M0 0h5v1h-5zM1 1h3v1h-3zM2 2h1v1h-1z" fill="#000"/></svg>
<span class="m" style="left:214.500px;top:137px">По<u>к</u>азать</span>
<svg class="a" style="left:266px;top:142px" width="5" height="3" viewBox="0 0 5 3" shape-rendering="crispEdges"><path d="M0 0h5v1h-5zM1 1h3v1h-3zM2 2h1v1h-1z" fill="#000"/></svg>
<div class="sp" style="left:278px;top:133px;height:20px"></div>
<svg class="a" style="left:285px;top:135px" width="16" height="16" viewBox="0 0 16 16"><path d="M5.500 2.500h6l3 4-3 8h-7z" fill="#f0e27a" stroke="#443" stroke-width=".9"/><path d="M11.500 2.500l-.5 4h3.500" fill="#fff7b0" stroke="#443" stroke-width=".7"/><path d="M0.500 8.500l5-4.500v3h4v3h-4v3z" fill="#2a3fb0" stroke="#112" stroke-width=".6"/></svg>
<svg class="a" style="left:308px;top:135px" width="16" height="16" viewBox="0 0 16 16"><path d="M5.500 2.500h6l3 4-3 8h-7z" fill="#f0e27a" stroke="#443" stroke-width=".9"/><path d="M11.500 2.500l-.5 4h3.500" fill="#fff7b0" stroke="#443" stroke-width=".7"/><path d="M10.500 8.500l-5-4.500v3h-4.500v3h4.500v3z" fill="#2a3fb0" stroke="#112" stroke-width=".6"/></svg>
<svg class="a" style="left:331px;top:135px" width="16" height="16" viewBox="0 0 16 16"><path d="M5.500 2.500h6l3 4-3 8h-7z" fill="#f0e27a" stroke="#443" stroke-width=".9"/><path d="M11.500 2.500l-.5 4h3.500" fill="#fff7b0" stroke="#443" stroke-width=".7"/><path d="M1 7l3 4 6-8" fill="none" stroke="#2a3fb0" stroke-width="2"/></svg>
<svg class="a" style="left:353px;top:142px" width="5" height="3" viewBox="0 0 5 3" shape-rendering="crispEdges"><path d="M0 0h5v1h-5zM1 1h3v1h-3zM2 2h1v1h-1z" fill="#000"/></svg>
<svg class="a" style="left:364px;top:135px" width="16" height="16" viewBox="0 0 16 16"><path d="M5.500 2.500h6l3 4-3 8h-7z" fill="#f0e27a" stroke="#443" stroke-width=".9"/><path d="M11.500 2.500l-.5 4h3.500" fill="#fff7b0" stroke="#443" stroke-width=".7"/><path d="M1 3l7 8M8 3l-7 8" stroke="#c22" stroke-width="1.600"/></svg>
<svg class="a" style="left:387px;top:142px" width="5" height="3" viewBox="0 0 5 3" shape-rendering="crispEdges"><path d="M0 0h5v1h-5zM1 1h3v1h-3zM2 2h1v1h-1z" fill="#000"/></svg>
<div class="sp" style="left:398px;top:133px;height:20px"></div>
<svg class="a" style="left:405px;top:135px" width="16" height="16" viewBox="0 0 16 16"><rect x="2.500" y="5.500" width="12" height="9" fill="#f0e27a" stroke="#443"/><rect x="11" y="11" width="2.500" height="2.500" fill="#fff" stroke="#443" stroke-width=".6"/><path d="M3 1l1 3M0 4l3 1M6 2l-2 2.500" stroke="#dc2" stroke-width="1.200"/></svg>
<svg class="a" style="left:427px;top:142px" width="5" height="3" viewBox="0 0 5 3" shape-rendering="crispEdges"><path d="M0 0h5v1h-5zM1 1h3v1h-3zM2 2h1v1h-1z" fill="#000"/></svg>
<div class="sp" style="left:438px;top:133px;height:20px"></div>
<svg class="a" style="left:445px;top:135px" width="16" height="16" viewBox="0 0 16 16"><path d="M5.500 3.500h6l2 2v9h-8z" fill="#fff" stroke="#665"/><path d="M7 6.500h4M7 8.500h5M7 10.500h5M7 12.500h5" stroke="#d33"/><path d="M10 10l4-5 1.500 1-4 5-1.800.8z" fill="#e6c53a" stroke="#443" stroke-width=".6"/><path d="M3 0l1 3M0 3l3 1M6 1l-2 2.500M2 6l1.500-1" stroke="#dc2" stroke-width="1.100"/></svg>
<div class="sp" style="left:467px;top:133px;height:20px"></div>
<svg class="a" style="left:474px;top:135px" width="16" height="16" viewBox="0 0 16 16"><rect x="1.500" y="1.500" width="13" height="13" fill="#fff" stroke="#223a7a" stroke-width="1"/><rect x="2" y="9" width="12" height="5" fill="#c8d0e8"/><path d="M3 10.500h10M3 12.500h10" stroke="#223a7a"/><path d="M4 3.500h8" stroke="#223a7a"/><path d="M8 4l-3 3h2v2h2v-2h2z" fill="#2a3fb0"/></svg>
<svg class="a" style="left:497px;top:148px" width="5" height="3" viewBox="0 0 5 3" shape-rendering="crispEdges"><path d="M0 0h5v1h-5zM1 1h3v1h-3zM2 2h1v1h-1z" fill="#000"/></svg>
<div class="a" style="left:1px;top:156px;width:1021px;height:2px;background:linear-gradient(#8a8773 50%,#9f9c89 50%)"></div>
<div class="a" style="left:1px;top:156px;width:1px;height:533px;background:#8a8773"></div>
<div class="a" style="left:2px;top:158px;width:1px;height:531px;background:#c0bdac"></div>
<div class="a" style="left:3px;top:158px;width:1002px;height:24px;background:#e9e6d3"></div>
<div class="a" style="left:3px;top:163px;width:1001px;height:13px;background:#fff"></div>
<div class="a" style="left:3px;top:163px;width:5px;height:13px;background:#aca899"></div>
<div class="a" style="left:996px;top:163px;width:8px;height:13px;background:#aca899"></div>
<div class="a" style="left:21px;top:168px;width:1px;height:2px;background:#000"></div>
<div class="a" style="left:30px;top:167px;width:1px;height:5px;background:#000"></div>
<div class="a" style="left:39px;top:168px;width:1px;height:2px;background:#000"></div>
<div class="a" style="left:30px;top:177px;width:1px;height:3px;background:#b5b2a0"></div>
<span class="rn" style="left:39.4px">1</span>
<div class="a" style="left:58px;top:168px;width:1px;height:2px;background:#000"></div>
<div class="a" style="left:68px;top:167px;width:1px;height:5px;background:#000"></div>
<div class="a" style="left:77px;top:168px;width:1px;height:2px;background:#000"></div>
<div class="a" style="left:49px;top:177px;width:1px;height:3px;background:#b5b2a0"></div>
<div class="a" style="left:68px;top:177px;width:1px;height:3px;background:#b5b2a0"></div>
<span class="rn" style="left:77.1px">2</span>
<div class="a" style="left:96px;top:168px;width:1px;height:2px;background:#000"></div>
<div class="a" style="left:105px;top:167px;width:1px;height:5px;background:#000"></div>
<div class="a" style="left:115px;top:168px;width:1px;height:2px;background:#000"></div>
<div class="a" style="left:87px;top:177px;width:1px;height:3px;background:#b5b2a0"></div>
<div class="a" style="left:105px;top:177px;width:1px;height:3px;background:#b5b2a0"></div>
<span class="rn" style="left:114.8px">3</span>
<div class="a" style="left:134px;top:168px;width:1px;height:2px;background:#000"></div>
<div class="a" style="left:143px;top:167px;width:1px;height:5px;background:#000"></div>
<div class="a" style="left:153px;top:168px;width:1px;height:2px;background:#000"></div>
<div class="a" style="left:124px;top:177px;width:1px;height:3px;background:#b5b2a0"></div>
<div class="a" style="left:143px;top:177px;width:1px;height:3px;background:#b5b2a0"></div>
<span class="rn" style="left:152.6px">4</span>
<div class="a" style="left:172px;top:168px;width:1px;height:2px;background:#000"></div>
<div class="a" style="left:181px;top:167px;width:1px;height:5px;background:#000"></div>
<div class="a" style="left:190px;top:168px;width:1px;height:2px;background:#000"></div>
<div class="a" style="left:162px;top:177px;width:1px;height:3px;background:#b5b2a0"></div>
<div class="a" style="left:181px;top:177px;width:1px;height:3px;background:#b5b2a0"></div>
<span class="rn" style="left:190.3px">5</span>
<div class="a" style="left:209px;top:168px;width:1px;height:2px;background:#000"></div>
<div class="a" style="left:219px;top:167px;width:1px;height:5px;background:#000"></div>
<div class="a" style="left:228px;top:168px;width:1px;height:2px;background:#000"></div>
<div class="a" style="left:200px;top:177px;width:1px;height:3px;background:#b5b2a0"></div>
<div class="a" style="left:219px;top:177px;width:1px;height:3px;background:#b5b2a0"></div>
<span class="rn" style="left:228.1px">6</span>
<div class="a" style="left:247px;top:168px;width:1px;height:2px;background:#000"></div>
<div class="a" style="left:256px;top:167px;width:1px;height:5px;background:#000"></div>
<div class="a" style="left:266px;top:168px;width:1px;height:2px;background:#000"></div>
<div class="a" style="left:238px;top:177px;width:1px;height:3px;background:#b5b2a0"></div>
<div class="a" style="left:256px;top:177px;width:1px;height:3px;background:#b5b2a0"></div>
<span class="rn" style="left:265.9px">7</span>
<div class="a" style="left:285px;top:168px;width:1px;height:2px;background:#000"></div>
<div class="a" style="left:294px;top:167px;width:1px;height:5px;background:#000"></div>
<div class="a" style="left:304px;top:168px;width:1px;height:2px;background:#000"></div>
<div class="a" style="left:275px;top:177px;width:1px;height:3px;background:#b5b2a0"></div>
<div class="a" style="left:294px;top:177px;width:1px;height:3px;background:#b5b2a0"></div>
<span class="rn" style="left:303.6px">8</span>
<div class="a" style="left:323px;top:168px;width:1px;height:2px;background:#000"></div>
<div class="a" style="left:332px;top:167px;width:1px;height:5px;background:#000"></div>
<div class="a" style="left:341px;top:168px;width:1px;height:2px;background:#000"></div>
<div class="a" style="left:313px;top:177px;width:1px;height:3px;background:#b5b2a0"></div>
<div class="a" style="left:332px;top:177px;width:1px;height:3px;background:#b5b2a0"></div>
<span class="rn" style="left:341.4px">9</span>
<div class="a" style="left:360px;top:168px;width:1px;height:2px;background:#000"></div>
<div class="a" style="left:370px;top:167px;width:1px;height:5px;background:#000"></div>
<div class="a" style="left:379px;top:168px;width:1px;height:2px;background:#000"></div>
<div class="a" style="left:351px;top:177px;width:1px;height:3px;background:#b5b2a0"></div>
<div class="a" style="left:370px;top:177px;width:1px;height:3px;background:#b5b2a0"></div>
<span class="rn" style="left:379.1px">10</span>
<div class="a" style="left:398px;top:168px;width:1px;height:2px;background:#000"></div>
<div class="a" style="left:407px;top:167px;width:1px;height:5px;background:#000"></div>
<div class="a" style="left:417px;top:168px;width:1px;height:2px;background:#000"></div>
<div class="a" style="left:389px;top:177px;width:1px;height:3px;background:#b5b2a0"></div>
<div class="a" style="left:407px;top:177px;width:1px;height:3px;background:#b5b2a0"></div>
<span class="rn" style="left:416.9px">11</span>
<div class="a" style="left:436px;top:168px;width:1px;height:2px;background:#000"></div>
<div class="a" style="left:445px;top:167px;width:1px;height:5px;background:#000"></div>
<div class="a" style="left:455px;top:168px;width:1px;height:2px;background:#000"></div>
<div class="a" style="left:426px;top:177px;width:1px;height:3px;background:#b5b2a0"></div>
<div class="a" style="left:445px;top:177px;width:1px;height:3px;background:#b5b2a0"></div>
<span class="rn" style="left:454.6px">12</span>
<div class="a" style="left:474px;top:168px;width:1px;height:2px;background:#000"></div>
<div class="a" style="left:483px;top:167px;width:1px;height:5px;background:#000"></div>
<div class="a" style="left:492px;top:168px;width:1px;height:2px;background:#000"></div>
<div class="a" style="left:464px;top:177px;width:1px;height:3px;background:#b5b2a0"></div>
<div class="a" style="left:483px;top:177px;width:1px;height:3px;background:#b5b2a0"></div>
<span class="rn" style="left:492.4px">13</span>
<div class="a" style="left:511px;top:168px;width:1px;height:2px;background:#000"></div>
<div class="a" style="left:521px;top:167px;width:1px;height:5px;background:#000"></div>
<div class="a" style="left:530px;top:168px;width:1px;height:2px;background:#000"></div>
<div class="a" style="left:502px;top:177px;width:1px;height:3px;background:#b5b2a0"></div>
<div class="a" style="left:521px;top:177px;width:1px;height:3px;background:#b5b2a0"></div>
<span class="rn" style="left:530.1px">14</span>
<div class="a" style="left:549px;top:168px;width:1px;height:2px;background:#000"></div>
<div class="a" style="left:558px;top:167px;width:1px;height:5px;background:#000"></div>
<div class="a" style="left:568px;top:168px;width:1px;height:2px;background:#000"></div>
<div class="a" style="left:540px;top:177px;width:1px;height:3px;background:#b5b2a0"></div>
<div class="a" style="left:558px;top:177px;width:1px;height:3px;background:#b5b2a0"></div>
<span class="rn" style="left:567.9px">15</span>
<div class="a" style="left:587px;top:168px;width:1px;height:2px;background:#000"></div>
<div class="a" style="left:596px;top:167px;width:1px;height:5px;background:#000"></div>
<div class="a" style="left:606px;top:168px;width:1px;height:2px;background:#000"></div>
<div class="a" style="left:577px;top:177px;width:1px;height:3px;background:#b5b2a0"></div>
<div class="a" style="left:596px;top:177px;width:1px;height:3px;background:#b5b2a0"></div>
<span class="rn" style="left:605.6px">16</span>
<div class="a" style="left:625px;top:168px;width:1px;height:2px;background:#000"></div>
<div class="a" style="left:634px;top:167px;width:1px;height:5px;background:#000"></div>
<div class="a" style="left:643px;top:168px;width:1px;height:2px;background:#000"></div>
<div class="a" style="left:615px;top:177px;width:1px;height:3px;background:#b5b2a0"></div>
<div class="a" style="left:634px;top:177px;width:1px;height:3px;background:#b5b2a0"></div>
<span class="rn" style="left:643.4px">17</span>
<div class="a" style="left:662px;top:168px;width:1px;height:2px;background:#000"></div>
<div class="a" style="left:672px;top:167px;width:1px;height:5px;background:#000"></div>
<div class="a" style="left:681px;top:168px;width:1px;height:2px;background:#000"></div>
<div class="a" style="left:653px;top:177px;width:1px;height:3px;background:#b5b2a0"></div>
<div class="a" style="left:672px;top:177px;width:1px;height:3px;background:#b5b2a0"></div>
<span class="rn" style="left:681.1px">18</span>
<div class="a" style="left:700px;top:168px;width:1px;height:2px;background:#000"></div>
<div class="a" style="left:709px;top:167px;width:1px;height:5px;background:#000"></div>
<div class="a" style="left:719px;top:168px;width:1px;height:2px;background:#000"></div>
<div class="a" style="left:691px;top:177px;width:1px;height:3px;background:#b5b2a0"></div>
<div class="a" style="left:709px;top:177px;width:1px;height:3px;background:#b5b2a0"></div>
<span class="rn" style="left:718.9px">19</span>
<div class="a" style="left:738px;top:168px;width:1px;height:2px;background:#000"></div>
<div class="a" style="left:747px;top:167px;width:1px;height:5px;background:#000"></div>
<div class="a" style="left:757px;top:168px;width:1px;height:2px;background:#000"></div>
<div class="a" style="left:728px;top:177px;width:1px;height:3px;background:#b5b2a0"></div>
<div class="a" style="left:747px;top:177px;width:1px;height:3px;background:#b5b2a0"></div>
<span class="rn" style="left:756.6px">20</span>
<div class="a" style="left:776px;top:168px;width:1px;height:2px;background:#000"></div>
<div class="a" style="left:785px;top:167px;width:1px;height:5px;background:#000"></div>
<div class="a" style="left:794px;top:168px;width:1px;height:2px;background:#000"></div>
<div class="a" style="left:766px;top:177px;width:1px;height:3px;background:#b5b2a0"></div>
<div class="a" style="left:785px;top:177px;width:1px;height:3px;background:#b5b2a0"></div>
<span class="rn" style="left:794.4px">21</span>
<div class="a" style="left:813px;top:168px;width:1px;height:2px;background:#000"></div>
<div class="a" style="left:823px;top:167px;width:1px;height:5px;background:#000"></div>
<div class="a" style="left:832px;top:168px;width:1px;height:2px;background:#000"></div>
<div class="a" style="left:804px;top:177px;width:1px;height:3px;background:#b5b2a0"></div>
<div class="a" style="left:823px;top:177px;width:1px;height:3px;background:#b5b2a0"></div>
<span class="rn" style="left:832.1px">22</span>
<div class="a" style="left:851px;top:168px;width:1px;height:2px;background:#000"></div>
<div class="a" style="left:860px;top:167px;width:1px;height:5px;background:#000"></div>
<div class="a" style="left:870px;top:168px;width:1px;height:2px;background:#000"></div>
<div class="a" style="left:842px;top:177px;width:1px;height:3px;background:#b5b2a0"></div>
<div class="a" style="left:860px;top:177px;width:1px;height:3px;background:#b5b2a0"></div>
<span class="rn" style="left:869.9px">23</span>
<div class="a" style="left:889px;top:168px;width:1px;height:2px;background:#000"></div>
<div class="a" style="left:898px;top:167px;width:1px;height:5px;background:#000"></div>
<div class="a" style="left:908px;top:168px;width:1px;height:2px;background:#000"></div>
<div class="a" style="left:879px;top:177px;width:1px;height:3px;background:#b5b2a0"></div>
<div class="a" style="left:898px;top:177px;width:1px;height:3px;background:#b5b2a0"></div>
<span class="rn" style="left:907.6px">24</span>
<div class="a" style="left:927px;top:168px;width:1px;height:2px;background:#000"></div>
<div class="a" style="left:936px;top:167px;width:1px;height:5px;background:#000"></div>
<div class="a" style="left:945px;top:168px;width:1px;height:2px;background:#000"></div>
<div class="a" style="left:917px;top:177px;width:1px;height:3px;background:#b5b2a0"></div>
<div class="a" style="left:936px;top:177px;width:1px;height:3px;background:#b5b2a0"></div>
<span class="rn" style="left:945.4px">25</span>
<div class="a" style="left:964px;top:168px;width:1px;height:2px;background:#000"></div>
<div class="a" style="left:974px;top:167px;width:1px;height:5px;background:#000"></div>
<div class="a" style="left:983px;top:168px;width:1px;height:2px;background:#000"></div>
<div class="a" style="left:955px;top:177px;width:1px;height:3px;background:#b5b2a0"></div>
<div class="a" style="left:974px;top:177px;width:1px;height:3px;background:#b5b2a0"></div>
<div class="a" style="left:993px;top:177px;width:1px;height:3px;background:#b5b2a0"></div>
<svg class="a" style="left:7px;top:160px" width="10" height="22" viewBox="0 0 10 22"><path d="M0.500 0.500h8v3l-4 4-4-4z" fill="#f1efe2" stroke="#9d9a88"/><path d="M0.500 14.500v-3l4-4 4 4v3z" fill="#f1efe2" stroke="#9d9a88"/><rect x="0.500" y="15.500" width="8" height="5.500" fill="#e9e6d3" stroke="#9d9a88"/></svg>
<svg class="a" style="left:990px;top:168px" width="9" height="8" viewBox="0 0 9 8"><path d="M0.500 7.500v-3l4-4 4 4v3z" fill="#f1efe2" stroke="#9d9a88"/></svg>
<!-- document -->
<div id="doc"></div>
<div class="a" style="left:12px;top:212px;width:991px;height:381px;background:#000"></div>
<div class="a" style="left:13px;top:213px;width:115px;height:16px;background:#fff"></div>
<div class="a" style="left:13px;top:244px;width:115px;height:17px;background:#fff"></div>
<div class="rl" style="top:277px"></div>
<div class="re" style="top:277px"></div>
<div class="rl" style="top:292px"></div>
<div class="re" style="top:292px"></div>
<div class="rl" style="top:307px"></div>
<div class="re" style="top:307px"></div>
<div class="rl" style="top:322px"></div>
<div class="re" style="top:322px"></div>
<div class="rl" style="top:337px"></div>
<div class="re" style="top:337px"></div>
<div class="rl" style="top:352px"></div>
<div class="re" style="top:352px"></div>
<div class="rl" style="top:367px"></div>
<div class="re" style="top:367px"></div>
<div class="rl" style="top:382px"></div>
<div class="re" style="top:382px"></div>
<div class="rl" style="top:397px"></div>
<div class="re" style="top:397px"></div>
<div class="rl" style="top:412px"></div>
<div class="re" style="top:412px"></div>
<div class="rl" style="top:427px"></div>
<div class="re" style="top:427px"></div>
<div class="rl" style="top:442px"></div>
<div class="re" style="top:442px"></div>
<div class="rl" style="top:457px"></div>
<div class="re" style="top:457px"></div>
<div class="rl" style="top:472px"></div>
<div class="re" style="top:472px"></div>
<div class="rl" style="top:487px"></div>
<div class="re" style="top:487px"></div>
<div class="rl" style="top:502px"></div>
<div class="re" style="top:502px"></div>
<div class="rl" style="top:517px"></div>
<div class="re" style="top:517px"></div>
<div class="rl" style="top:532px"></div>
<div class="re" style="top:532px"></div>
<div class="rl" style="top:547px"></div>
<div class="re" style="top:547px"></div>
<div class="rl" style="top:562px"></div>
<div class="re" style="top:562px"></div>
<div class="rl" style="top:577px"></div>
<div class="re" style="top:577px"></div>
<div class="a" style="left:128px;top:262px;width:1px;height:331px;background:#000"></div><div class="a" style="left:228px;top:262px;width:1px;height:331px;background:#000"></div><div class="a" style="left:333px;top:262px;width:1px;height:331px;background:#000"></div><div class="a" style="left:442px;top:262px;width:1px;height:331px;background:#000"></div><div class="a" style="left:604px;top:262px;width:1px;height:331px;background:#000"></div><div class="a" style="left:715px;top:262px;width:1px;height:331px;background:#000"></div><div class="a" style="left:822px;top:262px;width:1px;height:331px;background:#000"></div><div class="a" style="left:993px;top:262px;width:1px;height:331px;background:#000"></div>
<span class="c" style="left:30.0px;top:263px">100</span>
<span class="c" style="left:138.5px;top:263px">76</span>
<span class="c" style="left:241.5px;top:263px">107</span>
<span class="c" style="left:348.0px;top:263px">183</span>
<span class="c" style="left:482.5px;top:263px">0,07</span>
<span class="c" style="left:618.0px;top:263px">245</span>
<span class="c" style="left:727.5px;top:263px">196</span>
<span class="c" style="left:868.0px;top:263px">0,11</span>
<span class="c" style="left:30.0px;top:278px">125</span>
<span class="c" style="left:138.5px;top:278px">87</span>
<span class="c" style="left:241.5px;top:278px">123</span>
<span class="c" style="left:348.0px;top:278px">210</span>
<span class="c" style="left:482.5px;top:278px">0,09</span>
<span class="c" style="left:618.0px;top:278px">295</span>
<span class="c" style="left:727.5px;top:278px">233</span>
<span class="c" style="left:868.0px;top:278px">0,16</span>
<span class="c" style="left:30.0px;top:293px">160</span>
<span class="c" style="left:138.5px;top:293px">102</span>
<span class="c" style="left:241.5px;top:293px">144</span>
<span class="c" style="left:348.0px;top:293px">246</span>
<span class="c" style="left:482.5px;top:293px">0,14</span>
<span class="c" style="left:618.0px;top:293px">365</span>
<span class="c" style="left:727.5px;top:293px">285</span>
<span class="c" style="left:868.0px;top:293px">0,25</span>
<span class="c" style="left:30.0px;top:308px">200</span>
<span class="c" style="left:138.5px;top:308px">119</span>
<span class="c" style="left:241.5px;top:308px">169</span>
<span class="c" style="left:348.0px;top:308px">288</span>
<span class="c" style="left:482.5px;top:308px">0,21</span>
<span class="c" style="left:618.0px;top:308px">445</span>
<span class="c" style="left:727.5px;top:308px">345</span>
<span class="c" style="left:868.0px;top:308px">0,37</span>
<span class="c" style="left:30.0px;top:323px">250</span>
<span class="c" style="left:138.5px;top:323px">141</span>
<span class="c" style="left:241.5px;top:323px">200</span>
<span class="c" style="left:348.0px;top:323px">341</span>
<span class="c" style="left:482.5px;top:323px">0,31</span>
<span class="c" style="left:618.0px;top:323px">545</span>
<span class="c" style="left:727.5px;top:323px">420</span>
<span class="c" style="left:868.0px;top:323px">0,56</span>
<span class="c" style="left:30.0px;top:338px">315</span>
<span class="c" style="left:138.5px;top:338px">170</span>
<span class="c" style="left:241.5px;top:338px">240</span>
<span class="c" style="left:348.0px;top:338px">410</span>
<span class="c" style="left:482.5px;top:338px">0,48</span>
<span class="c" style="left:618.0px;top:338px">675</span>
<span class="c" style="left:727.5px;top:338px">518</span>
<span class="c" style="left:868.0px;top:338px">0,87</span>
<span class="c" style="left:30.0px;top:353px">355</span>
<span class="c" style="left:138.5px;top:353px">136</span>
<span class="c" style="left:241.5px;top:353px">192</span>
<span class="c" style="left:348.0px;top:353px">328</span>
<span class="c" style="left:482.5px;top:353px">0,42</span>
<span class="c" style="left:618.0px;top:353px">578</span>
<span class="c" style="left:727.5px;top:353px">400</span>
<span class="c" style="left:868.0px;top:353px">0,74</span>
<span class="c" style="left:30.0px;top:368px">400</span>
<span class="c" style="left:138.5px;top:368px">149</span>
<span class="c" style="left:241.5px;top:368px">211</span>
<span class="c" style="left:348.0px;top:368px">360</span>
<span class="c" style="left:482.5px;top:368px">0,53</span>
<span class="c" style="left:618.0px;top:368px">645</span>
<span class="c" style="left:727.5px;top:368px">445</span>
<span class="c" style="left:868.0px;top:368px">0,99</span>
<span class="c" style="left:30.0px;top:383px">450</span>
<span class="c" style="left:138.5px;top:383px">164</span>
<span class="c" style="left:241.5px;top:383px">232</span>
<span class="c" style="left:348.0px;top:383px">396</span>
<span class="c" style="left:482.5px;top:383px">0,66</span>
<span class="c" style="left:618.0px;top:383px">720</span>
<span class="c" style="left:727.5px;top:383px">495</span>
<span class="c" style="left:868.0px;top:383px">1,19</span>
<span class="c" style="left:30.0px;top:398px">500</span>
<span class="c" style="left:138.5px;top:398px">178</span>
<span class="c" style="left:241.5px;top:398px">252</span>
<span class="c" style="left:348.0px;top:398px">430</span>
<span class="c" style="left:482.5px;top:398px">0,79</span>
<span class="c" style="left:618.0px;top:398px">795</span>
<span class="c" style="left:727.5px;top:398px">545</span>
<span class="c" style="left:868.0px;top:398px">1,43</span>
<span class="c" style="left:30.0px;top:413px">560</span>
<span class="c" style="left:138.5px;top:413px">195</span>
<span class="c" style="left:241.5px;top:413px">277</span>
<span class="c" style="left:348.0px;top:413px">472</span>
<span class="c" style="left:482.5px;top:413px">0,98</span>
<span class="c" style="left:618.0px;top:413px">885</span>
<span class="c" style="left:727.5px;top:413px">605</span>
<span class="c" style="left:868.0px;top:413px">1,80</span>
<span class="c" style="left:30.0px;top:428px">630</span>
<span class="c" style="left:138.5px;top:428px">216</span>
<span class="c" style="left:241.5px;top:428px">306</span>
<span class="c" style="left:348.0px;top:428px">522</span>
<span class="c" style="left:482.5px;top:428px">1,21</span>
<span class="c" style="left:618.0px;top:428px">990</span>
<span class="c" style="left:727.5px;top:428px">675</span>
<span class="c" style="left:868.0px;top:428px">2,24</span>
<span class="c" style="left:30.0px;top:443px">710</span>
<span class="c" style="left:138.5px;top:443px">208</span>
<span class="c" style="left:241.5px;top:443px">294</span>
<span class="c" style="left:348.0px;top:443px">502</span>
<span class="c" style="left:482.5px;top:443px">1,32</span>
<span class="c" style="left:618.0px;top:443px">1065</span>
<span class="c" style="left:727.5px;top:443px">710</span>
<span class="c" style="left:868.0px;top:443px">2,64</span>
<span class="c" style="left:30.0px;top:458px">800</span>
<span class="c" style="left:138.5px;top:458px">234</span>
<span class="c" style="left:241.5px;top:458px">331</span>
<span class="c" style="left:348.0px;top:458px">565</span>
<span class="c" style="left:482.5px;top:458px">1,66</span>
<span class="c" style="left:618.0px;top:458px">1200</span>
<span class="c" style="left:727.5px;top:458px">800</span>
<span class="c" style="left:868.0px;top:458px">3,30</span>
<span class="c" style="left:30.0px;top:473px">900</span>
<span class="c" style="left:138.5px;top:473px">264</span>
<span class="c" style="left:241.5px;top:473px">373</span>
<span class="c" style="left:348.0px;top:473px">637</span>
<span class="c" style="left:482.5px;top:473px">2,10</span>
<span class="c" style="left:618.0px;top:473px">1350</span>
<span class="c" style="left:727.5px;top:473px">900</span>
<span class="c" style="left:868.0px;top:473px">4,10</span>
<span class="c" style="left:30.0px;top:488px">1000</span>
<span class="c" style="left:138.5px;top:488px">292</span>
<span class="c" style="left:241.5px;top:488px">414</span>
<span class="c" style="left:348.0px;top:488px">706</span>
<span class="c" style="left:482.5px;top:488px">2,60</span>
<span class="c" style="left:618.0px;top:488px">1500</span>
<span class="c" style="left:727.5px;top:488px">1000</span>
<span class="c" style="left:868.0px;top:488px">5,20</span>
<span class="c" style="left:30.0px;top:503px">1120</span>
<span class="c" style="left:138.5px;top:503px">328</span>
<span class="c" style="left:241.5px;top:503px">465</span>
<span class="c" style="left:348.0px;top:503px">793</span>
<span class="c" style="left:482.5px;top:503px">3,25</span>
<span class="c" style="left:618.0px;top:503px">1680</span>
<span class="c" style="left:727.5px;top:503px">1120</span>
<span class="c" style="left:868.0px;top:503px">6,50</span>
<span class="c" style="left:30.0px;top:518px">1250</span>
<span class="c" style="left:138.5px;top:518px">366</span>
<span class="c" style="left:241.5px;top:518px">516</span>
<span class="c" style="left:348.0px;top:518px">882</span>
<span class="c" style="left:482.5px;top:518px">4,10</span>
<span class="c" style="left:618.0px;top:518px">1875</span>
<span class="c" style="left:727.5px;top:518px">1250</span>
<span class="c" style="left:868.0px;top:518px">8,10</span>
<span class="c" style="left:30.0px;top:533px">1400</span>
<span class="c" style="left:138.5px;top:533px">410</span>
<span class="c" style="left:241.5px;top:533px">580</span>
<span class="c" style="left:348.0px;top:533px">990</span>
<span class="c" style="left:482.5px;top:533px">5,10</span>
<span class="c" style="left:618.0px;top:533px">2100</span>
<span class="c" style="left:727.5px;top:533px">1400</span>
<span class="c" style="left:868.0px;top:533px">10,20</span>
<span class="c" style="left:30.0px;top:548px">1600</span>
<span class="c" style="left:138.5px;top:548px">470</span>
<span class="c" style="left:241.5px;top:548px">665</span>
<span class="c" style="left:348.0px;top:548px">1135</span>
<span class="c" style="left:482.5px;top:548px">6,65</span>
<span class="c" style="left:618.0px;top:548px">2400</span>
<span class="c" style="left:727.5px;top:548px">1600</span>
<span class="c" style="left:868.0px;top:548px">13,20</span>
<span class="c" style="left:30.0px;top:563px">1800</span>
<span class="c" style="left:138.5px;top:563px">525</span>
<span class="c" style="left:241.5px;top:563px">745</span>
<span class="c" style="left:348.0px;top:563px">1270</span>
<span class="c" style="left:482.5px;top:563px">8,10</span>
<span class="c" style="left:618.0px;top:563px">2700</span>
<span class="c" style="left:727.5px;top:563px">1800</span>
<span class="c" style="left:868.0px;top:563px">16,80</span>
<span class="c" style="left:30.0px;top:578px">2000</span>
<span class="c" style="left:138.5px;top:578px">585</span>
<span class="c" style="left:241.5px;top:578px">828</span>
<span class="c" style="left:348.0px;top:578px">1413</span>
<span class="c" style="left:482.5px;top:578px">10,50</span>
<span class="c" style="left:618.0px;top:578px">3000</span>
<span class="c" style="left:727.5px;top:578px">2000</span>
<span class="c" style="left:868.0px;top:578px">20,70</span>
<div class="a" style="left:462px;top:186px;width:93px;height:26px;background:#000"></div>
<span class="a ser" style="left:462.500px;top:186px;color:#fff;font-size:16px;line-height:18px;letter-spacing:0;white-space:nowrap">Размеры, мм</span>
<div class="a" style="left:905px;top:182px;width:97px;height:3px;background:#000"></div>
<span class="c" style="left:461px;top:214px;width:200px;letter-spacing:0;">Отвод с углом</span>
<span class="c" style="left:-30px;top:230px;width:200px;letter-spacing:0;font-style:italic;">d</span>
<span class="c" style="left:266.5px;top:230px;width:200px;letter-spacing:0;">45°</span>
<span class="c" style="left:698.5px;top:230px;width:200px;letter-spacing:0;">90°</span>
<span class="c" style="left:78.5px;top:246px;width:200px;letter-spacing:0;font-style:italic;">g</span>
<span class="c" style="left:181.5px;top:246px;width:200px;letter-spacing:0;font-style:italic;">к</span>
<span class="c" style="left:288px;top:246px;width:200px;letter-spacing:0;font-style:italic;">l</span>
<span class="c" style="left:422.5px;top:246px;width:200px;letter-spacing:0;">площадь поверхности, м<sup style="font-size:8px;line-height:0;vertical-align:4px">2</sup></span>
<span class="c" style="left:558px;top:246px;width:200px;letter-spacing:0;font-style:italic;">т</span>
<span class="c" style="left:667.5px;top:246px;width:200px;letter-spacing:0;font-style:italic;">и</span>
<span class="c" style="left:808px;top:246px;width:200px;letter-spacing:0;">площадь поверхности, м<sup style="font-size:8px;line-height:0;vertical-align:4px">2</sup></span>
<div class="re" style="top:229px"></div>
<div class="re" style="top:245px"></div>
<div class="re" style="top:261px"></div>
<span class="a ser" style="left:31px;top:601px;font-size:13px;line-height:15px;white-space:nowrap;letter-spacing:0.01px"><span style="letter-spacing:3.200px">Примечание</span>. В таблице для отводов диаметром 100-630 мм включительно приведены размеры с учетом увеличения длины стакана на 45 мм под фланец.</span>
<span class="a ser" style="left:905.500px;top:625px;font-size:16px;line-height:18px;white-space:nowrap;letter-spacing:2.570px">Таблица 5</span>
<span class="a ser" style="left:460px;top:652px;font-size:16px;line-height:18px;letter-spacing:0;white-space:nowrap">Размеры, мм</span>
<div class="a" style="left:1005px;top:158px;width:17px;height:514px;background:repeating-conic-gradient(#fff 0% 25%,#ece9d8 0% 50%) 0 0/2px 2px"></div>
<div class="sb" style="left:1005px;top:164px;width:17px;height:17px"><div style="position:absolute;left:3.5px;top:5.5px;border-left:4px solid transparent;border-right:4px solid transparent;border-bottom:4px solid #000"></div></div>
<div class="sb" style="left:1005px;top:308px;width:17px;height:12px"></div>
<div class="a" style="left:1005px;top:621px;width:17px;height:51px;background:#ece9d8"></div>
<div class="sb" style="left:1005px;top:604px;width:17px;height:17px"><div style="position:absolute;left:3.5px;top:5.5px;border-left:4px solid transparent;border-right:4px solid transparent;border-top:4px solid #000"></div></div>
<div class="a" style="left:1022px;top:158px;width:2px;height:532px;background:#f8f7f0"></div>
<div class="sb" style="left:1005px;top:158px;width:17px;height:6px"></div>
<svg class="a" style="left:1009px;top:625px" width="9" height="9" viewBox="0 0 9 9"><path d="M1 4l3.500-3.500 3.500 3.500zM1 8.500l3.500-3.500 3.500 3.500z" fill="#1a2fd0"/></svg>
<div class="a" style="left:1010px;top:642px;width:7px;height:7px;border-radius:4px;border:1px solid #444;background:radial-gradient(circle at 35% 35%,#ddd,#888)"></div>
<svg class="a" style="left:1009px;top:659px" width="9" height="9" viewBox="0 0 9 9"><path d="M1 .5l3.500 3.500 3.500-3.500zM1 5l3.500 3.500 3.500-3.500z" fill="#1a2fd0"/></svg>
<div class="a" style="left:3px;top:672px;width:1002px;height:17px;background:repeating-conic-gradient(#fff 0% 25%,#ece9d8 0% 50%) 0 0/2px 2px"></div>
<div class="a" style="left:3px;top:672px;width:70px;height:18px;background:#ece9d8"></div>
<svg class="a" style="left:3px;top:672px" width="68" height="18" viewBox="3 672 68 18" shape-rendering="crispEdges"><path d="M7 676h9v1h-9zM7 678h9v1h-9zM7 680h9v1h-9zM7 682h9v1h-9z" fill="#111"/><rect x="19.500" y="673.500" width="16" height="15" fill="#e1e6ee" stroke="#316ac5"/><rect x="24.500" y="676.500" width="6" height="6" fill="#fff" stroke="#111"/><rect x="28" y="680" width="4" height="4" fill="#1a2a8a"/><rect x="41.500" y="676.500" width="7" height="7" fill="#fff" stroke="#111"/><path d="M43 679h4v1h-4zM43 681h4v1h-4z" fill="#111"/><path d="M58 676h9v1h-9zM61 678h6v1h-6zM63 680h4v1h-4zM61 682h6v1h-6zM58 684h9v1h-9zM58 678h1v1h-1zM60 680h1v1h-1zM58 682h1v1h-1z" fill="#222"/></svg>
<div class="sb" style="left:70px;top:672px;width:17px;height:17px"><div style="position:absolute;left:5.5px;top:3.5px;border-top:4px solid transparent;border-bottom:4px solid transparent;border-right:4px solid #000"></div></div>
<div class="sb" style="left:87px;top:672px;width:618px;height:17px"></div>
<div class="sb" style="left:988px;top:672px;width:17px;height:17px"><div style="position:absolute;left:5.5px;top:3.5px;border-top:4px solid transparent;border-bottom:4px solid transparent;border-left:4px solid #000"></div></div>
<div class="a" style="left:0px;top:689px;width:1024px;height:1px;background:#fbfaf4"></div>
<div class="gr" style="left:3px;top:696px;height:18px"></div>
<span class="m" style="left:11px;top:698px;font-size:11px">Дейст<u>в</u>ия</span>
<svg class="a" style="left:63px;top:702px" width="5" height="3" viewBox="0 0 5 3" shape-rendering="crispEdges"><path d="M0 0h5v1h-5zM1 1h3v1h-3zM2 2h1v1h-1z" fill="#000"/></svg>
<svg class="a" style="left:77px;top:696px" width="16" height="16" viewBox="0 0 16 16"><path d="M4.500 1.500v12l3-3 2 4.500 1.800-.8-2-4.500h4z" fill="#fff" stroke="#222"/></svg>
<div class="sp" style="left:98px;top:695px;height:20px"></div>
<span class="m" style="left:105px;top:698px">Автофи<u>г</u>уры</span>
<svg class="a" style="left:172px;top:702px" width="5" height="3" viewBox="0 0 5 3" shape-rendering="crispEdges"><path d="M0 0h5v1h-5zM1 1h3v1h-3zM2 2h1v1h-1z" fill="#000"/></svg>
<svg class="a" style="left:185px;top:696px" width="16" height="16" viewBox="0 0 16 16"><path d="M2 2l12 12" stroke="#444" stroke-width="1"/></svg>
<svg class="a" style="left:208px;top:696px" width="16" height="16" viewBox="0 0 16 16"><path d="M2 2l10 10" stroke="#444" stroke-width="1"/><path d="M14.500 14.500l-6.500-2.500 4-4z" fill="#333"/></svg>
<svg class="a" style="left:231px;top:696px" width="16" height="16" viewBox="0 0 16 16"><rect x="0.500" y="2.500" width="15" height="11" fill="none" stroke="#444"/></svg>
<svg class="a" style="left:254px;top:696px" width="16" height="16" viewBox="0 0 16 16"><ellipse cx="8" cy="8" rx="7.500" ry="5.500" fill="none" stroke="#444"/></svg>
<svg class="a" style="left:277px;top:696px" width="16" height="16" viewBox="0 0 16 16"><rect x="1.500" y="1.500" width="13" height="13" fill="#fff" stroke="#333"/><path d="M3 6.500h10M3 8.500h10M3 10.500h10M3 12.500h10M9 3.500h4" stroke="#445"/><text x="3" y="6" font-family="Liberation Sans,sans-serif" font-size="5" font-weight="bold" fill="#222">A</text></svg>
<svg class="a" style="left:300px;top:696px" width="16" height="16" viewBox="0 0 16 16"><path d="M10 1h3v14h-3z" fill="#7a86d8"/><path d="M1 13l9-12h2l-2 14h-3l.5-3h-3l-1.500 2z" fill="#3b4bb5" stroke="#223" stroke-width=".5"/></svg>
<svg class="a" style="left:323px;top:696px" width="16" height="16" viewBox="0 0 16 16"><circle cx="8" cy="8" r="5.500" fill="none" stroke="#2a3fb0" stroke-width="1.300" stroke-dasharray="2.500 2"/><circle cx="8" cy="2.500" r="1.600" fill="#c33"/><circle cx="3" cy="11" r="1.600" fill="#2a3fb0"/><circle cx="13" cy="11" r="1.600" fill="#393"/></svg>
<svg class="a" style="left:346px;top:696px" width="16" height="16" viewBox="0 0 16 16"><rect x="1.500" y="1.500" width="13" height="13" fill="#fff" stroke="#555" stroke-dasharray="1 1"/><circle cx="8" cy="5.500" r="2.400" fill="#c55"/><path d="M4 14c0-4 1.500-6 4-6s4 2 4 6z" fill="#a33"/></svg>
<svg class="a" style="left:369px;top:696px" width="16" height="16" viewBox="0 0 16 16"><rect x="1.500" y="1.500" width="13" height="13" fill="#f0e89a" stroke="#333"/><circle cx="11" cy="5" r="1.700" fill="#fff" stroke="#555" stroke-width=".7"/><path d="M2 14l4-6 3 3.500 2-2 3.500 4.500z" fill="#777" stroke="#333" stroke-width=".6"/></svg>
<div class="sp" style="left:391px;top:695px;height:20px"></div>
<svg class="a" style="left:398px;top:696px" width="16" height="16" viewBox="0 0 16 16"><path d="M3 6l6-5 5 6-6 5z" fill="#f4f4f4" stroke="#444"/><path d="M13 7c1.500 1.500 2 4 .5 5-1-1-1.500-3-.5-5z" fill="#2a3fb0" /><rect x="1" y="12.500" width="14" height="3.500" fill="#f4ee3a"/></svg>
<svg class="a" style="left:420px;top:704px" width="5" height="3" viewBox="0 0 5 3" shape-rendering="crispEdges"><path d="M0 0h5v1h-5zM1 1h3v1h-3zM2 2h1v1h-1z" fill="#000"/></svg>
<svg class="a" style="left:432px;top:696px" width="16" height="16" viewBox="0 0 16 16"><path d="M5 9l6-8 2 1-5 8-3 1z" fill="#9ac" stroke="#234" stroke-width=".9"/><path d="M1 10c2-1 3 0 4 0" fill="none" stroke="#234"/><rect x="1" y="12.500" width="14" height="3.500" fill="#1a2fd0"/></svg>
<svg class="a" style="left:454px;top:704px" width="5" height="3" viewBox="0 0 5 3" shape-rendering="crispEdges"><path d="M0 0h5v1h-5zM1 1h3v1h-3zM2 2h1v1h-1z" fill="#000"/></svg>
<svg class="a" style="left:466px;top:696px" width="16" height="16" viewBox="0 0 16 16"><text x="8" y="11.500" text-anchor="middle" font-family="Liberation Serif,serif" font-size="14" font-weight="bold" fill="#2a3fb0">A</text><rect x="1" y="12.500" width="14" height="3.500" fill="#8a1f7a"/></svg>
<svg class="a" style="left:488px;top:704px" width="5" height="3" viewBox="0 0 5 3" shape-rendering="crispEdges"><path d="M0 0h5v1h-5zM1 1h3v1h-3zM2 2h1v1h-1z" fill="#000"/></svg>
<svg class="a" style="left:500px;top:696px" width="16" height="16" viewBox="0 0 16 16"><rect x="1" y="2" width="14" height="1" fill="#333"/><rect x="1" y="5" width="14" height="2" fill="#333"/><rect x="1" y="9" width="14" height="3" fill="#333"/><rect x="1" y="13.500" width="14" height="1" fill="#333"/></svg>
<svg class="a" style="left:523px;top:696px" width="16" height="16" viewBox="0 0 16 16"><path d="M1 3h14" stroke="#333" stroke-dasharray="1 1"/><path d="M1 6h14" stroke="#333" stroke-dasharray="2 1"/><path d="M1 9h14" stroke="#333" stroke-dasharray="3 1"/><path d="M1 12.500h14" stroke="#333" stroke-width="1.500" stroke-dasharray="4 1 1 1"/></svg>
<svg class="a" style="left:546px;top:696px" width="16" height="16" viewBox="0 0 16 16"><path d="M1 4h12M3 8h12M1 12h12" stroke="#333" stroke-width="1.200"/><path d="M15.500 4l-4-2.500v5zM0 8l4-2.500v5zM15.500 12l-4-2.500v5z" fill="#333"/></svg>
<svg class="a" style="left:569px;top:696px" width="16" height="16" viewBox="0 0 16 16"><rect x="4" y="4" width="11" height="11" fill="#234"/><rect x="1.500" y="1.500" width="11" height="11" fill="#3a9aa8" stroke="#234"/></svg>
<svg class="a" style="left:592px;top:696px" width="16" height="16" viewBox="0 0 16 16"><path d="M1.500 5.500h9v9h-9z" fill="#7cc8d0" stroke="#234"/><path d="M1.500 5.500l4-4h9l-4 4z" fill="#b8e4e8" stroke="#234"/><path d="M10.500 5.500l4-4v9l-4 4z" fill="#3a8a98" stroke="#234"/></svg>
<svg class="a" style="left:615px;top:709px" width="5" height="3" viewBox="0 0 5 3" shape-rendering="crispEdges"><path d="M0 0h5v1h-5zM1 1h3v1h-3zM2 2h1v1h-1z" fill="#000"/></svg>
<div class="a" style="left:0;top:717px;width:1024px;height:1px;background:#9d9a88"></div>
<span class="m" style="left:10px;top:723px;color:#aca899">Стр.</span>
<span class="m" style="left:77px;top:723px;color:#aca899">Разд</span>
<span class="m" style="left:207px;top:723px;color:#aca899">На</span>
<span class="m" style="left:268px;top:723px;color:#aca899">Ст</span>
<span class="m" style="left:313px;top:723px;color:#aca899">Кол</span>
<span class="m" style="left:378px;top:723px;color:#aca899">ЗАП</span>
<span class="m" style="left:408px;top:723px;color:#aca899">ИСПР</span>
<span class="m" style="left:445px;top:723px;color:#aca899">ВДЛ</span>
<span class="m" style="left:476px;top:723px;color:#aca899">ЗАМ</span>
<span class="m" style="left:508px;top:723px">русский (Ро</span>
<div class="a" style="left:0;top:737px;width:1024px;height:5px;background:linear-gradient(#a8ccf8 0,#3f8cf0 22%,#3a84ea 100%)"></div>
<div class="a" style="left:0;top:737px;width:93px;height:5px;background:linear-gradient(#3a7a3a 0,#3a7a3a 18%,transparent 22%),linear-gradient(90deg,#7fc67f 0,#79c179 70%,#3aa63a 88%,#2e8e2e 100%)"></div>
<div class="a" style="left:968px;top:737px;width:56px;height:5px;background:linear-gradient(#9cd8f8 0,#22a4ee 22%,#1e9ce8 100%)"></div>
<span class="a" style="left:937px;top:727px;font:bold 11px/11px 'DejaVu Sans','Liberation Sans',sans-serif;color:#f4f4f4;text-shadow:-1px -1px 0 #111,1px -1px 0 #111,-1px 1px 0 #111,1px 1px 0 #111,0 1px 0 #111,1px 0 0 #111,-1px 0 0 #111,0 -1px 0 #111;white-space:nowrap">CMET4UK.RU</span>
</div></body></html>
